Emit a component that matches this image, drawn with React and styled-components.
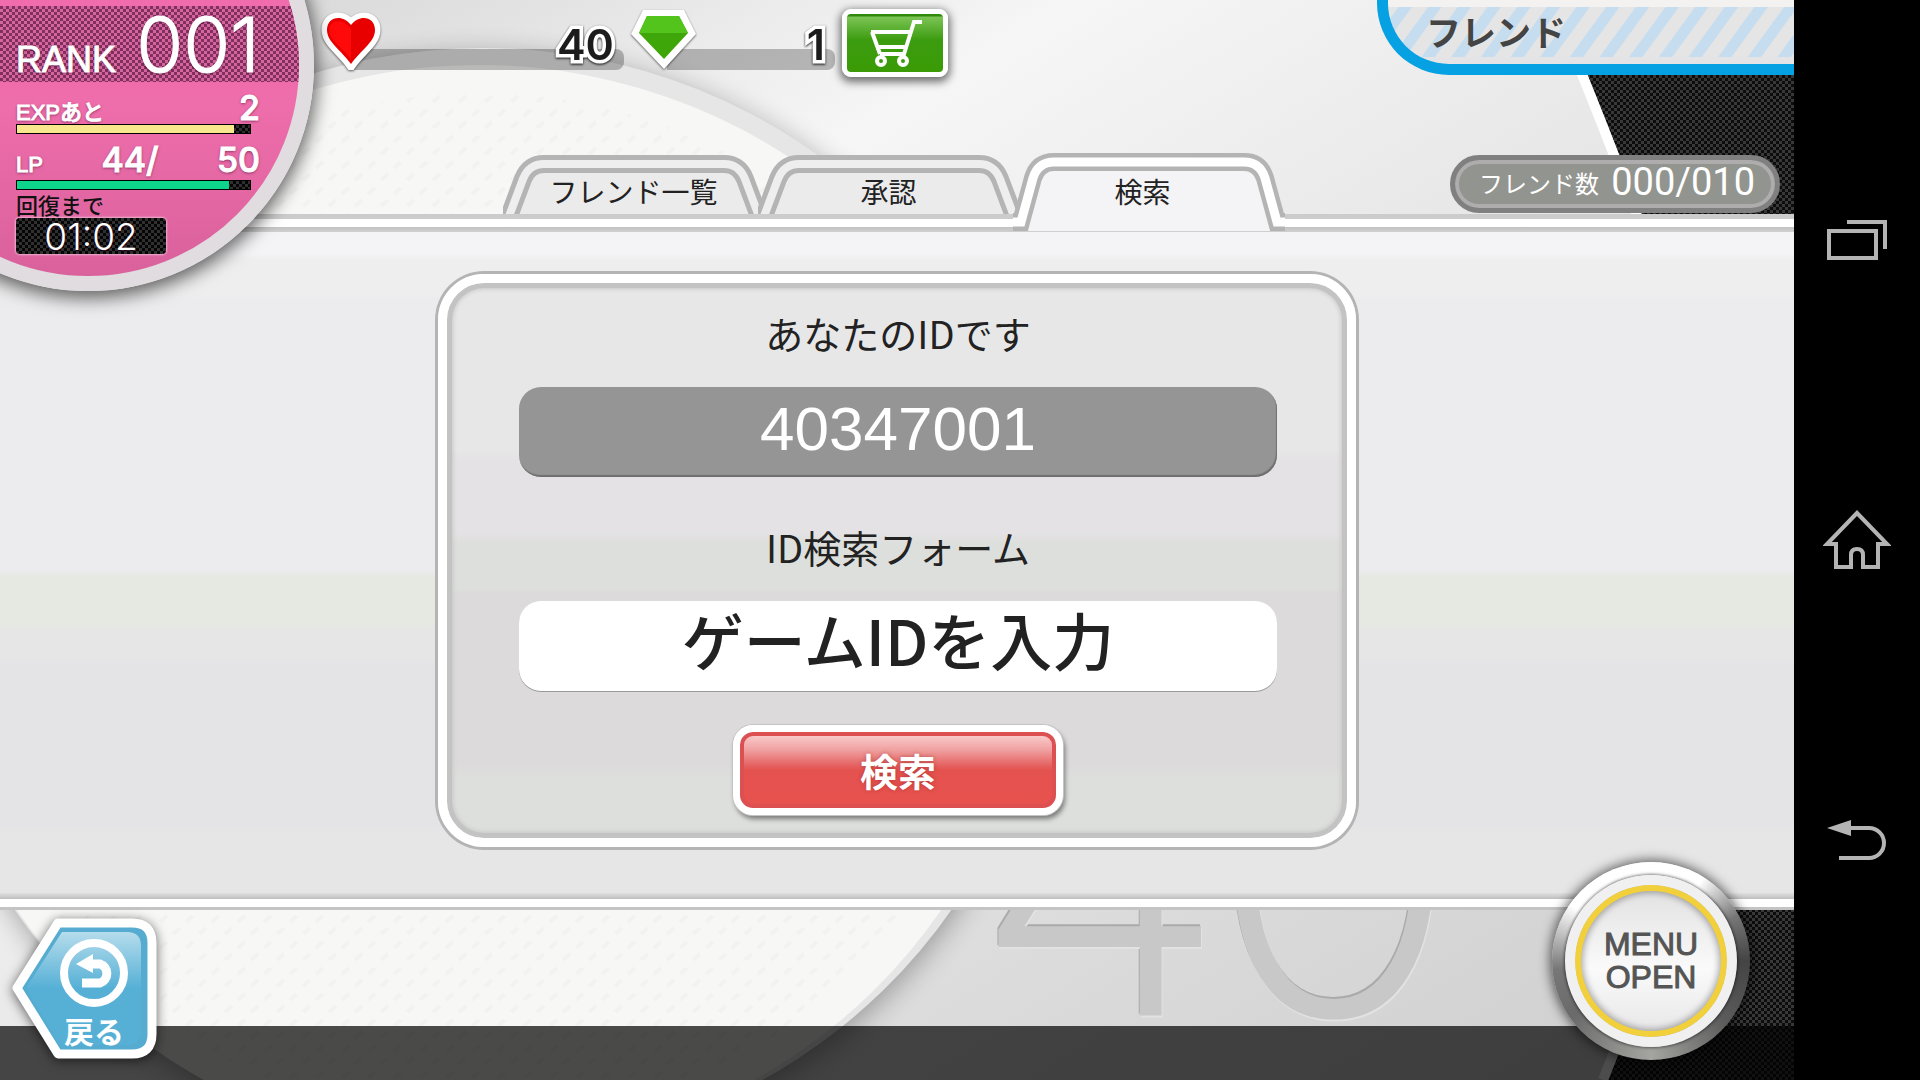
import React from 'react';
import styled, { createGlobalStyle, css } from 'styled-components';

const GlobalStyle = createGlobalStyle`
  * {
    box-sizing: border-box;
  }

  body {
    margin: 0;
    background: #000000;
    font-family: 'Noto Sans CJK JP', sans-serif;
    color: #222222;
  }

  button {
    border: 0;
    padding: 0;
    background: none;
    font: inherit;
    cursor: pointer;
  }
`;

const mesh = css`
  background: repeating-conic-gradient(#303030 0 25%, #050505 0 50%) 0 0 / 6px 6px;
`;

const Screen = styled.div`
  display: flex;
  min-height: 100vh;
`;

const Stage = styled.main`
  position: relative;
  display: flex;
  flex-direction: column;
  flex: 1;
  min-width: 0;
  overflow: hidden;
  isolation: isolate;
`;

const Backdrop = styled.svg`
  position: absolute;
  inset: 0;
  width: 100%;
  height: 100%;
  z-index: -1;
`;

/* ---------- header ---------- */

const Header = styled.header`
  display: flex;
  align-items: flex-start;
  height: 153px;
  padding-left: 321px;
`;

const Currency = styled.div`
  display: flex;
  align-items: flex-start;
  width: ${(props) => props.$width}px;
  margin-right: 6px;
`;

const CurrencyIcon = styled.svg`
  flex: none;
  margin-right: -30px;
  filter: drop-shadow(0 1px 1px rgba(0, 0, 0, 0.6));
  z-index: 1;
`;

const CurrencyBar = styled.div`
  display: flex;
  align-items: flex-end;
  justify-content: flex-end;
  flex: 1;
  height: 21px;
  margin-top: 49px;
  padding-right: 10px;
  border-radius: 0 8px 8px 0;
  background: rgba(0, 0, 0, 0.25);
`;

const Amount = styled.span`
  font-family: Inter, sans-serif;
  font-size: 43px;
  font-weight: 600;
  line-height: 52px;
  color: #1c1c1c;
  -webkit-text-stroke: 7px #ffffff;
  paint-order: stroke;
  filter: drop-shadow(0 1px 1px rgba(0, 0, 0, 0.9));
`;

const CartButton = styled.button`
  display: flex;
  align-items: center;
  justify-content: center;
  width: 106px;
  height: 68px;
  margin: 9px 0 0 1px;
  border: 5px solid #ffffff;
  border-radius: 9px;
  background: linear-gradient(#2f8a0c 0 2px, #7cc455 3px, #3c9c10 26px, #3a9b05 100%);
  box-shadow: 0 3px 8px 2px rgba(0, 0, 0, 0.55);
`;

const Title = styled.h1`
  width: 417px;
  height: 75px;
  margin: 0 0 0 auto;
  padding-left: 38px;
  border: solid #06a1e2;
  border-width: 0 0 11px 11px;
  border-radius: 0 0 0 72px;
  background:
    linear-gradient(#f3f2f0 0 7px, transparent 7px 57px, #e4e4e6 57px),
    repeating-linear-gradient(126deg, #e6e5e6 0 12px, #c6ddf0 13px 23px, #e6e5e6 24px);
  font-size: 35px;
  font-weight: 700;
  line-height: 62px;
  color: #444444;
`;

/* ---------- rank badge ---------- */

const Badge = styled.section`
  position: absolute;
  top: 0;
  left: 0;
  width: 268px;
  padding: 6px 8px 0 16px;
  color: #ffffff;
  text-shadow: 0 1px 3px rgba(60, 0, 40, 0.7);
  z-index: 2;
`;

const BadgeDisc = styled.div`
  position: absolute;
  top: -161px;
  left: -138px;
  width: 452px;
  height: 452px;
  overflow: hidden;
  border: 15px solid #e0dcdf;
  border-radius: 50%;
  background: linear-gradient(#f06cac 45%, #ee6dab 60%, #d9619c);
  box-shadow: 0 4px 18px 3px rgba(0, 0, 0, 0.6);
  z-index: -1;

  &::before {
    content: '';
    display: block;
    height: 76px;
    margin-top: 152px;
    background: repeating-conic-gradient(#812f5b 0 25%, #d465a0 0 50%) 0 0 / 6px 6px;
  }
`;

const StatRow = styled.div`
  display: flex;
  align-items: baseline;
  justify-content: space-between;
  height: ${(props) => props.$height}px;
`;

const RankLabel = styled.span`
  font: 36px/76px 'Liberation Sans', sans-serif;
  -webkit-text-stroke: 1px #ffffff;
`;

const RankValue = styled.span`
  font: 300 76px/76px Inter, sans-serif;
  -webkit-text-stroke: 1px #ffffff;
`;

const StatLabel = styled.span`
  font: 500 22px/52px 'Liberation Sans', 'Noto Sans CJK JP', sans-serif;
  -webkit-text-stroke: 1px #ffffff;
`;

const StatValue = styled.span`
  font: 500 34px/52px Inter, sans-serif;
  -webkit-text-stroke: 1px #ffffff;
`;

const Gauge = styled.div`
  ${mesh}
  width: 235px;
  height: 10px;
  border: 1px solid #000000;
`;

const GaugeFill = styled.div`
  height: 8px;
  background: ${(props) => props.$color};
`;

const RecoverLabel = styled.div`
  font-size: 22px;
  font-weight: 500;
  line-height: 28px;
  color: #111111;
  text-shadow: none;
`;

const Timer = styled.div`
  ${mesh}
  width: 150px;
  height: 36px;
  border-radius: 4px;
  box-shadow: 0 0 2px 1px rgba(255, 255, 255, 0.5);
  font: 300 37px/38px Inter, sans-serif;
  text-align: center;
`;

/* ---------- tabs ---------- */

const TabRow = styled.div`
  display: grid;
  grid-template-columns: 1fr auto 1fr;
  align-items: start;
  height: 61px;
  z-index: 1;
`;

const Tabs = styled.nav`
  display: flex;
  grid-column: 2;
  align-items: flex-start;
`;

const Tab = styled.button`
  position: relative;
  width: ${(props) => (props.$active ? 272 : 262)}px;
  height: ${(props) => (props.$active ? 78 : 59)}px;
  margin: ${(props) => (props.$active ? 0 : 2)}px 0 0 -7px;
  padding-right: ${(props) => (props.$active ? 12 : 0)}px;
  color: #222222;
  font-size: 28px;
  line-height: ${(props) => (props.$active ? 76 : 72)}px;
  isolation: isolate;

  span {
    display: block;
    height: 78px;
  }
`;

const TabShape = styled.svg`
  position: absolute;
  top: 0;
  left: 0;
  z-index: -1;
`;

const FriendCount = styled.div`
  display: flex;
  align-items: center;
  justify-content: space-between;
  justify-self: end;
  width: 330px;
  height: 58px;
  margin: 2px 14px 0 0;
  padding: 0 20px 4px 24px;
  border: 5px solid #808080;
  border-radius: 29px;
  background: #92948f;
  box-shadow: inset 0 0 0 4px #aeacad;
  color: #ffffff;
  font-size: 24px;
`;

const Count = styled.span`
  font: 38px/44px Roboto, sans-serif;
`;

/* ---------- main band and card ---------- */

const Band = styled.div`
  display: flex;
  flex: 1;
  justify-content: center;
  padding: 47px 24px 52px;
  border-top: 8px solid #ffffff;
  border-bottom: 8px solid #ffffff;
  margin: 5px 0 3px;
  box-shadow: 0 -5px 0 #cccccc, 0 3px 0 #c4c4c4;
  background:
    linear-gradient(#c2c2c2, #d0d0d0) top / 100% 5px no-repeat,
    linear-gradient(#e0e0e0, #bebebe) bottom / 100% 6px no-repeat,
    linear-gradient(
      #f4f3f5 4%,
      #eeeeee 5% 10%,
      #ecebee 11% 51%,
      #e5e9e2 52% 59%,
      #e6e6e6 60% 64%,
      #e4e3e6 65% 89%,
      #e6e6e6 90%
    );
`;

const Card = styled.form`
  display: flex;
  flex-direction: column;
  align-items: center;
  width: 100%;
  max-width: 918px;
  padding: 18px 70px 22px 72px;
  border: 9px solid #ffffff;
  border-radius: 46px;
  background: linear-gradient(
    #e7e7e7 30%,
    #e4e2e5 32% 45%,
    #dddfdc 47% 55%,
    #dddadc 56% 87%,
    #dddfdc 89%
  );
  background-clip: padding-box;
  background-origin: padding-box;
  box-shadow:
    0 0 0 3px #b4b4b4,
    inset 0 0 0 5px #c3c3c3,
    inset 0 0 4px 6px #c8c8c8;
`;

const FieldLabel = styled.label`
  font-size: 38px;
  line-height: 64px;
`;

const fieldBox = css`
  display: block;
  width: 100%;
  height: 90px;
  border: 0;
  border-radius: 22px;
  text-align: center;
`;

const OwnId = styled.output`
  ${fieldBox}
  margin: 22px 0 38px;
  background: #959595;
  box-shadow: inset -1px -2px 1px #6f6f6f;
  color: #ffffff;
  font: 62px/84px 'Liberation Sans', sans-serif;
`;

const IdInput = styled.input`
  ${fieldBox}
  margin: 22px 0 34px;
  padding: 0 0 14px;
  background: #ffffff;
  box-shadow: 0 1px 0 #999999;
  font: 500 62px 'Noto Sans CJK JP', sans-serif;

  &::placeholder {
    color: #222222;
    opacity: 1;
  }
`;

const SearchButton = styled.button`
  width: 330px;
  height: 90px;
  border: 7px solid #ffffff;
  border-radius: 20px;
  background: linear-gradient(#f9c9c9 4px, #f0a0a0 18px, #e4605f 34px, #e4524f 38px, #e8524e);
  box-shadow:
    0 0 0 1px #c4c4c4,
    2px 4px 5px rgba(0, 0, 0, 0.45),
    inset 0 0 0 4px #dc5052;
  color: #ffffff;
  font-size: 38px;
  font-weight: 700;
  line-height: 68px;
  text-shadow: 0 0 4px rgba(120, 20, 20, 0.4);
`;

/* ---------- footer ---------- */

const Footer = styled.footer`
  display: flex;
  align-items: flex-end;
  justify-content: space-between;
  height: 170px;
  padding: 0 44px 20px 10px;
  background: linear-gradient(transparent 116px, rgba(0, 0, 0, 0.7) 116px);
`;

const BackButton = styled.button`
  position: relative;
  width: 150px;
  height: 144px;
  padding: 84px 0 0 18px;
  color: #ffffff;
  font-size: 30px;
  font-weight: 700;
  line-height: 44px;
  isolation: isolate;
`;

const BackShape = styled.svg`
  position: absolute;
  inset: 0;
  overflow: visible;
  z-index: -1;
  filter: drop-shadow(0 2px 6px rgba(0, 0, 0, 0.6));
`;

const MenuRim = styled.div`
  padding: 13px;
  border-radius: 50%;
  background: conic-gradient(
    from 0deg,
    #ffffff 0 32deg,
    #777777 62deg,
    #444444 90deg,
    #5c5c5c 130deg,
    #a4a4a0 180deg,
    #6a6a6a 235deg,
    #777777 265deg,
    #ffffff 305deg
  );
  box-shadow: 0 0 12px 2px rgba(0, 0, 0, 0.6);
`;

const MenuButton = styled.button`
  width: 172px;
  height: 172px;
  border: 10px solid #f0f0f0;
  border-radius: 50%;
  background: linear-gradient(#e0e0e0, #fafafa 55%, #e6e6e6);
  box-shadow:
    0 0 3px 1px rgba(0, 0, 0, 0.5),
    inset 0 0 0 6px #f2d03c,
    inset 0 0 6px 8px rgba(0, 0, 0, 0.3);
  color: #555555;
  font: 32px/33px 'Liberation Sans', sans-serif;
  -webkit-text-stroke: 1px #555555;
`;

/* ---------- device navigation ---------- */

const DeviceBar = styled.nav`
  display: flex;
  flex-direction: column;
  align-items: center;
  justify-content: space-around;
  width: 126px;
  padding: 90px 0;
  background: #000000;

  button {
    display: flex;
    align-items: center;
    height: 62px;
  }

  svg {
    fill: none;
    stroke: #b4b4b4;
    stroke-width: 4;
  }
`;

const StageArt = () => (
  <Backdrop viewBox="0 0 1794 1080" preserveAspectRatio="xMidYMid slice" aria-hidden="true">
    <defs>
      <linearGradient id="sky" x1="0" y1="0" x2="1" y2="1">
        <stop offset="0" stopColor="#cfcfcf" />
        <stop offset="0.3" stopColor="#f6f6f6" />
        <stop offset="0.5" stopColor="#e8e8e8" />
        <stop offset="1" stopColor="#cdcdcd" />
      </linearGradient>
      <pattern id="mesh" width="6" height="6" patternUnits="userSpaceOnUse">
        <rect width="6" height="6" fill="#0c0c0c" />
        <rect width="3" height="3" fill="#383838" />
        <rect x="3" y="3" width="3" height="3" fill="#383838" />
      </pattern>
      <pattern id="dashes" width="26" height="26" patternUnits="userSpaceOnUse">
        <path d="M4 12l7-6M17 24l7-6" stroke="#f2f2f0" strokeWidth="4" />
      </pattern>
      <filter id="soft" x="-10%" y="-10%" width="120%" height="120%">
        <feGaussianBlur stdDeviation="14" />
      </filter>
    </defs>
    <rect width="1794" height="1080" fill="url(#sky)" />
    <path d="M1556 0Q1598 98 1641 213Q1750 560 1672 890Q1645 990 1608 1080H1794V0Z" fill="url(#mesh)" />
    <path
      d="M1551 0Q1593 98 1636 213Q1745 560 1667 890Q1640 990 1603 1080"
      fill="none"
      stroke="#ffffff"
      strokeWidth="10"
    />
    <g fontFamily="Inter" fontWeight="200" fontSize="420" strokeWidth="3">
      <text x="970 1206" y="1012" fill="#aaaaaa" stroke="#aaaaaa">40</text>
      <text x="972 1208" y="1016" fill="#e2e2e2" stroke="#e2e2e2">40</text>
      <text x="971 1207" y="1014" fill="#c8c8c8" stroke="#c8c8c8">40</text>
    </g>
    <ellipse cx="485" cy="606" rx="566" ry="552" fill="#000000" opacity="0.3" filter="url(#soft)" />
    <ellipse cx="483" cy="600" rx="566" ry="552" fill="#e6e6e6" />
    <ellipse cx="479" cy="608" rx="556" ry="543" fill="#f7f7f5" />
    <ellipse cx="479" cy="608" rx="530" ry="515" fill="url(#dashes)" />
  </Backdrop>
);

const HeartIcon = () => (
  <CurrencyIcon width="60" height="70" viewBox="0 0 60 70" aria-hidden="true">
    <path
      d="M30 64C20 50 6 42 6 30C6 16 22 14 30 25C38 14 54 16 54 30C54 42 40 50 30 64Z"
      fill="#e80000"
      stroke="#ffffff"
      strokeWidth="11"
      paintOrder="stroke"
    />
    <path d="M30 59C21 47 8 40 8 30C8 20 22 17 30 29Z" fill="#ff0a0a" />
  </CurrencyIcon>
);

const GemIcon = () => (
  <CurrencyIcon width="67" height="70" viewBox="0 0 67 70" aria-hidden="true">
    <path d="M13 10H54L66 34L34 69L1 34Z" fill="#ffffff" />
    <path d="M17 16H49L58 33L34 59L9 33Z" fill="#3fa60a" />
    <path d="M17 16H49L58 33H9Z" fill="#52c41c" />
  </CurrencyIcon>
);

const CartIcon = () => (
  <svg width="58" height="50" viewBox="0 0 58 50" fill="none" stroke="#ffffff" strokeWidth="4" aria-hidden="true">
    <path d="M56 4H48L38 36H14M5 14H45M6 14L14 36M12 29H40" />
    <circle cx="15" cy="43" r="4" />
    <circle cx="37" cy="43" r="4" />
  </svg>
);

const TAB_LINE = 'M5 64L20 24Q26 9 41 9H221Q236 9 242 24L257 64';
const ACTIVE_LINE = 'M0 69H8L20 25Q25 9 41 9H231Q247 9 252 25L264 69H272';

const TabItem = ({ label, active }) => (
  <Tab type="button" $active={active} aria-current={active ? 'page' : undefined}>
    <TabShape width={active ? 272 : 262} height={active ? 78 : 59} aria-hidden="true">
      {active && <path d="M8 78V69L20 25Q25 9 41 9H231Q247 9 252 25L264 69V78Z" fill="#f4f3f5" />}
      <path d={active ? ACTIVE_LINE : TAB_LINE} fill={active ? 'none' : '#ebebeb'} stroke="#b4b4b4" strokeWidth="18" />
      <path
        d={active ? ACTIVE_LINE : TAB_LINE}
        fill="none"
        stroke={active ? '#ffffff' : '#eeeeee'}
        strokeWidth={active ? 9 : 8}
      />
    </TabShape>
    <span>{label}</span>
  </Tab>
);

const RankBadge = ({ rank, expLeft, expPercent, lp, maxLp, timer }) => (
  <Badge>
    <BadgeDisc />
    <StatRow $height={76}>
      <RankLabel>RANK</RankLabel>
      <RankValue>{rank}</RankValue>
    </StatRow>
    <StatRow $height={42}>
      <StatLabel>EXPあと</StatLabel>
      <StatValue>{expLeft}</StatValue>
    </StatRow>
    <Gauge>
      <GaugeFill $color="#f9e78d" style={{ width: `${expPercent}%` }} />
    </Gauge>
    <StatRow $height={46}>
      <StatLabel>LP</StatLabel>
      <StatValue>{lp}/</StatValue>
      <StatValue>{maxLp}</StatValue>
    </StatRow>
    <Gauge>
      <GaugeFill $color="#0dd68c" style={{ width: `${(lp / maxLp) * 100 + 3}%` }} />
    </Gauge>
    <RecoverLabel>回復まで</RecoverLabel>
    <Timer>{timer}</Timer>
  </Badge>
);

const App = () => {
  return (
    <>
      <GlobalStyle />
      <Screen>
        <Stage>
          <StageArt />
          <RankBadge rank="001" expLeft={2} expPercent={93} lp={44} maxLp={50} timer="01:02" />

          <Header>
            <Currency $width={303}>
              <HeartIcon />
              <CurrencyBar>
                <Amount>40</Amount>
              </CurrencyBar>
            </Currency>
            <Currency $width={205}>
              <GemIcon />
              <CurrencyBar>
                <Amount>1</Amount>
              </CurrencyBar>
            </Currency>
            <CartButton type="button" aria-label="ショップ">
              <CartIcon />
            </CartButton>
            <Title>フレンド</Title>
          </Header>

          <TabRow>
            <Tabs>
              <TabItem label="フレンド一覧" />
              <TabItem label="承認" />
              <TabItem label="検索" active />
            </Tabs>
            <FriendCount>
              フレンド数 <Count>000/010</Count>
            </FriendCount>
          </TabRow>

          <Band>
            <Card onSubmit={(e) => e.preventDefault()}>
              <FieldLabel htmlFor="own-id">あなたのIDです</FieldLabel>
              <OwnId id="own-id">40347001</OwnId>
              <FieldLabel htmlFor="game-id">ID検索フォーム</FieldLabel>
              <IdInput id="game-id" type="text" placeholder="ゲームIDを入力" />
              <SearchButton type="submit">検索</SearchButton>
            </Card>
          </Band>

          <Footer>
            <BackButton type="button">
              <BackShape width="150" height="144" viewBox="0 0 150 144" aria-hidden="true">
                <defs>
                  <linearGradient id="backFill" x1="0" y1="0" x2="0" y2="1">
                    <stop offset="0" stopColor="#b5dcec" />
                    <stop offset="0.5" stopColor="#56b0d6" />
                  </linearGradient>
                </defs>
                <path
                  d="M48 7H122Q142 7 142 27V118Q142 138 122 138H48L7 72Z"
                  fill="#56acd0"
                  stroke="#ffffff"
                  strokeWidth="9"
                  strokeLinejoin="round"
                />
                <path d="M52 16H117Q131 16 131 30V112Q131 129 117 129H50L16 72Z" fill="url(#backFill)" />
                <circle cx="84" cy="57" r="30" fill="none" stroke="#ffffff" strokeWidth="8" />
                <path d="M72 67H90A10 10 0 0 0 90 48H80" fill="none" stroke="#ffffff" strokeWidth="9" />
                <path d="M66 48L83 38V57Z" fill="#ffffff" />
              </BackShape>
              戻る
            </BackButton>
            <MenuRim>
              <MenuButton type="button">
                MENU
                <br />
                OPEN
              </MenuButton>
            </MenuRim>
          </Footer>
        </Stage>

        <DeviceBar>
          <button type="button" aria-label="履歴">
            <svg width="60" height="40" viewBox="0 0 60 40">
              <path d="M2 11H49V38H2ZM20 2H58V29" />
            </svg>
          </button>
          <button type="button" aria-label="ホーム">
            <svg width="68" height="62" viewBox="0 0 68 62">
              <path d="M34 4L4 35H13V58H28V46Q28 40 34 40Q40 40 40 46V58H55V35H64Z" />
            </svg>
          </button>
          <button type="button" aria-label="戻る">
            <svg width="60" height="44" viewBox="0 0 60 44">
              <path d="M18 10H42A15 15 0 0 1 42 40H12" />
              <path d="M0 10L24 2V18Z" fill="#b4b4b4" stroke="none" />
            </svg>
          </button>
        </DeviceBar>
      </Screen>
    </>
  );
};

export default App;
